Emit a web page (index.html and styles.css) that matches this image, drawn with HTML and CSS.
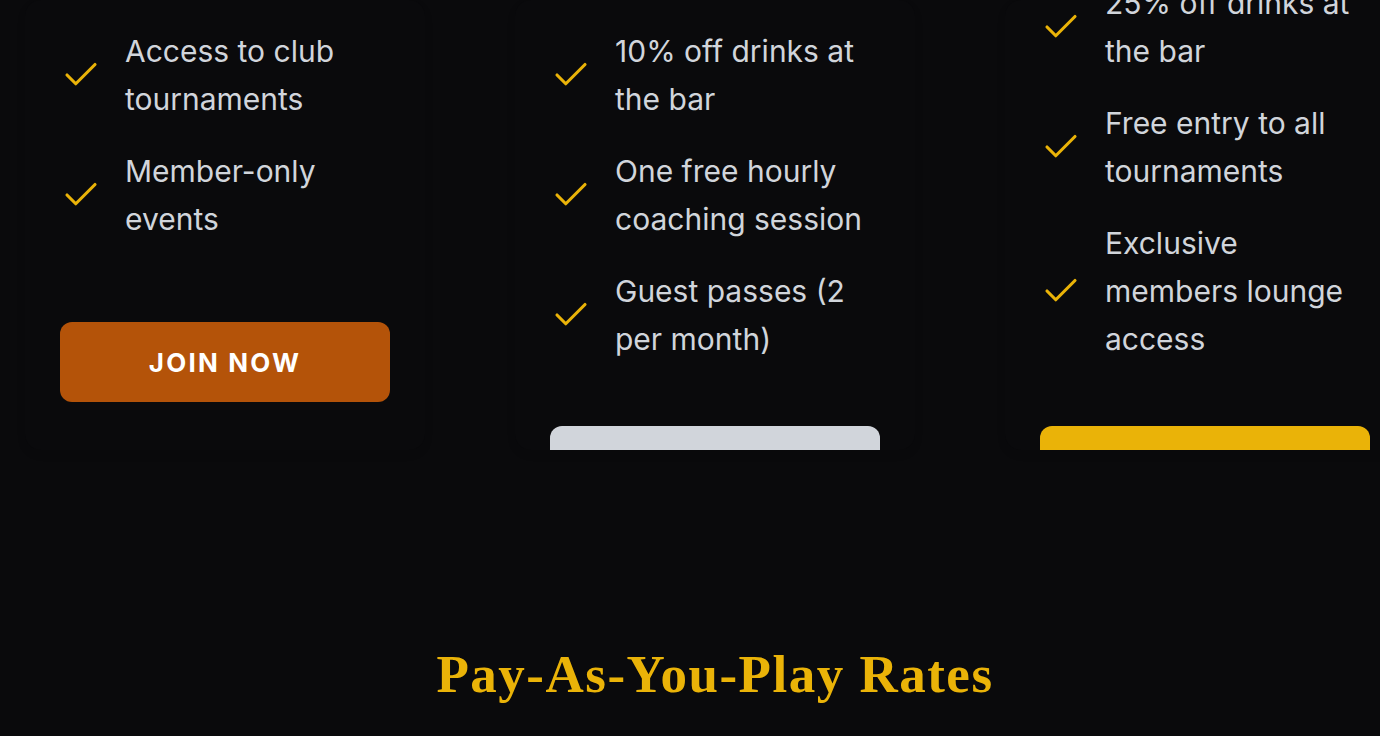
FILE: index.html
```html
<!DOCTYPE html>
<html lang="en">
<head>
  <meta charset="UTF-8" />
  <meta name="viewport" content="width=device-width, initial-scale=1.0"/>
  <title>Membership &amp; Rates</title>
  <link rel="stylesheet" href="styles.css">
</head>
<body>

<div class="page">

  <!-- membership plans -->
  <div class="plans">

    <div class="plan-card basic">
      <ul class="plan-list">
        <li>
          <svg class="check" viewBox="0 0 24 24"><path d="M20 6 9 17l-5-5"/></svg>
          <span>Access to club tournaments</span>
        </li>
        <li>
          <svg class="check" viewBox="0 0 24 24"><path d="M20 6 9 17l-5-5"/></svg>
          <span>Member-only events</span>
        </li>
      </ul>
      <button class="plan-btn btn-orange">Join Now</button>
    </div>

    <div class="plan-card">
      <ul class="plan-list">
        <li>
          <svg class="check" viewBox="0 0 24 24"><path d="M20 6 9 17l-5-5"/></svg>
          <span>10% off drinks at the bar</span>
        </li>
        <li>
          <svg class="check" viewBox="0 0 24 24"><path d="M20 6 9 17l-5-5"/></svg>
          <span>One free hourly coaching session</span>
        </li>
        <li>
          <svg class="check" viewBox="0 0 24 24"><path d="M20 6 9 17l-5-5"/></svg>
          <span>Guest passes (2 per month)</span>
        </li>
      </ul>
      <button class="plan-btn btn-grey">Join Now</button>
    </div>

    <div class="plan-card premium">
      <ul class="plan-list">
        <li>
          <svg class="check" viewBox="0 0 24 24"><path d="M20 6 9 17l-5-5"/></svg>
          <span>25% off drinks at the bar</span>
        </li>
        <li>
          <svg class="check" viewBox="0 0 24 24"><path d="M20 6 9 17l-5-5"/></svg>
          <span>Free entry to all tournaments</span>
        </li>
        <li>
          <svg class="check" viewBox="0 0 24 24"><path d="M20 6 9 17l-5-5"/></svg>
          <span>Exclusive members lounge access</span>
        </li>
      </ul>
      <button class="plan-btn btn-yellow">Join Now</button>
    </div>

  </div>

  <!-- pay as you play -->
  <h2 class="section-title">Pay-As-You-Play Rates</h2>

</div>

</body>
</html>
```

FILE: styles.css
```css
html, body {
  margin: 0;
  padding: 0;
}

body {
  background-color: #0a0a0c;
  color: #d1d5db;
  font-family: 'Inter', 'Liberation Sans', sans-serif;
  height: 736px;
  overflow: hidden;
}

.page {
  width: 1380px;
  margin-left: 25px;
}

.plans {
  display: grid;
  grid-template-columns: repeat(3, 400px);
  gap: 90px;
}

.plan-card {
  background-color: #0a0a0c;
  border-radius: 16px;
  box-shadow: 0 4px 10px rgba(0, 0, 0, 0.08);
  padding: 27px 35px 0;
  height: 423px;
  overflow: hidden;
}

.plan-list {
  list-style: none;
  margin: 0;
  padding: 0;
  display: flex;
  flex-direction: column;
  gap: 24px;
}

.premium .plan-list {
  margin-top: -48px;
}

.plan-list li {
  display: flex;
  align-items: center;
  gap: 23px;
  font-size: 30px;
  line-height: 48px;
}

.plan-list li span {
  flex: 1;
}

.check {
  width: 42px;
  height: 42px;
  flex-shrink: 0;
  fill: none;
  stroke: #eab308;
  stroke-width: 1.8;
  stroke-linecap: round;
  stroke-linejoin: round;
}

.plan-btn {
  display: block;
  width: 100%;
  height: 80px;
  margin-top: 63px;
  border: none;
  border-radius: 12px;
  font-family: 'Inter', 'Liberation Sans', sans-serif;
  font-size: 26px;
  font-weight: 700;
  letter-spacing: 2.2px;
  text-transform: uppercase;
  cursor: pointer;
}

.basic .plan-btn {
  margin-top: 79px;
}

.btn-orange {
  background-color: #b45309;
  color: #fff;
}

.btn-grey {
  background-color: #d1d5db;
  color: #111;
}

.btn-yellow {
  background-color: #eab308;
  color: #111;
}

.section-title {
  margin: 194px 0 0;
  text-align: center;
  font-family: 'Liberation Serif', 'DejaVu Serif', serif;
  font-size: 53px;
  font-weight: 700;
  letter-spacing: 1.5px;
  color: #eab308;
}
```
